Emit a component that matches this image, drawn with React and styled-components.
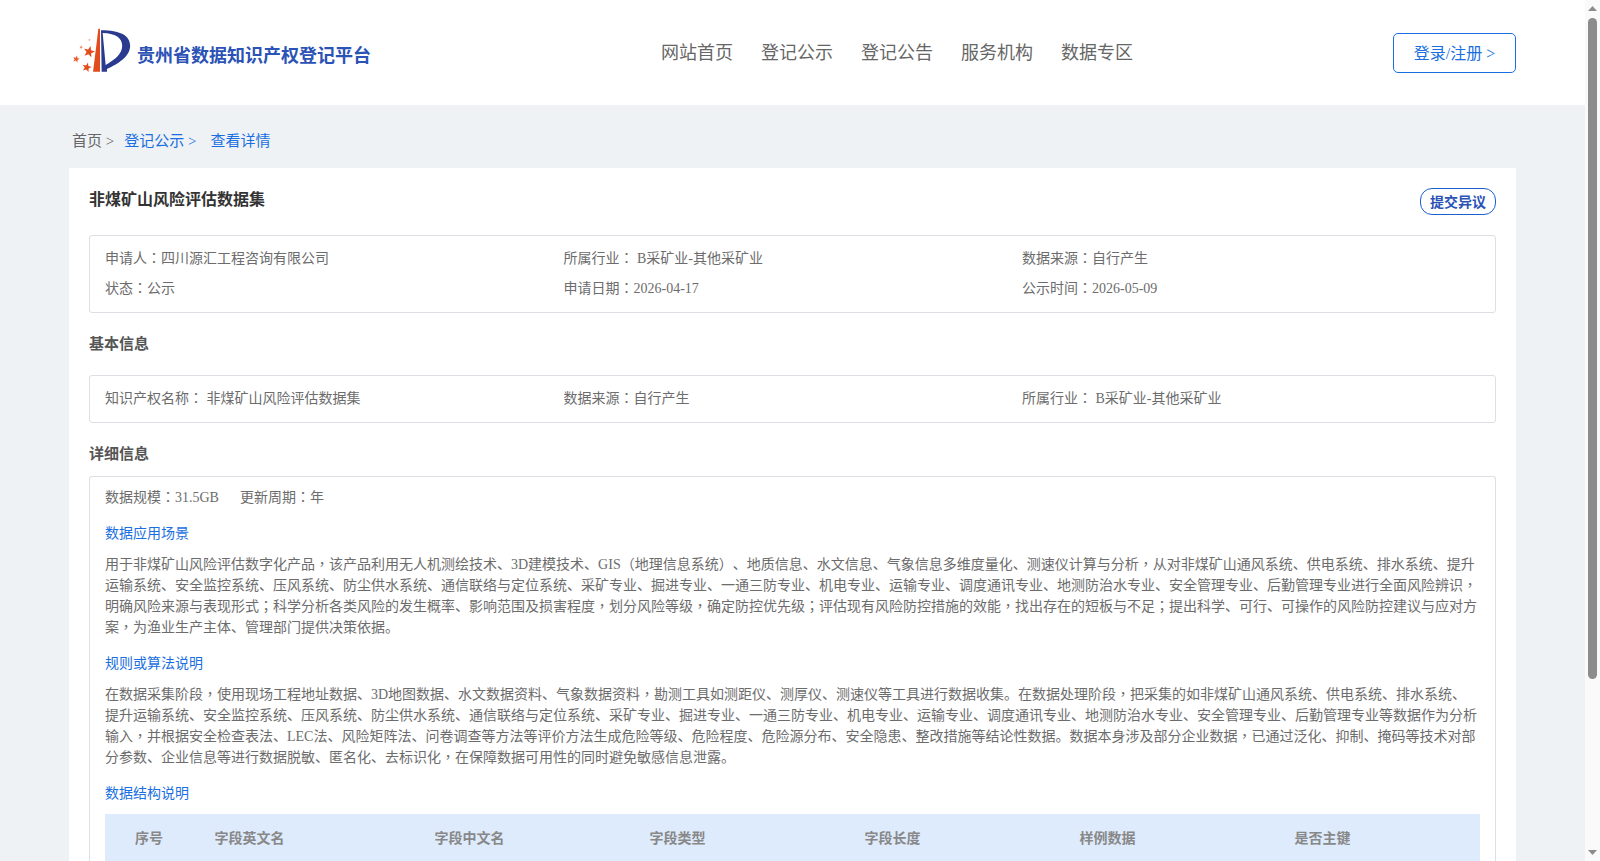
import React from "react";
import styled, { createGlobalStyle } from "styled-components";

const Global = createGlobalStyle`
  body {
    margin: 0;
    padding-right: 15px;
    background: #eff2f5;
    color: #6c6c6c;
    font-family: "Liberation Serif", "Noto Sans CJK SC", serif;
    font-size: 14px;
    text-spacing-trim: space-all;
    font-kerning: none;
  }
`;

const Header = styled.header`
  height: 105px;
  background: #fff;
  display: grid;
  grid-template-columns: 588px auto 1fr;
  align-items: center;
  padding: 0 69px 0 73px;
`;
const Brand = styled.div`
  display: flex;
  align-items: center;
  gap: 6px;
  color: #2b52b5;
  font-size: 18px;
  font-weight: bold;
  margin-top: 2px;
`;
const LogoMark = styled.svg`
  display: block;
  margin-bottom: 6px;
`;
const Nav = styled.nav`
  display: flex;
  gap: 28px;
  font-size: 18px;
  color: #666;
  margin-top: -3px;
`;
const Actions = styled.div`
  display: flex;
  justify-content: flex-end;
`;
const LoginButton = styled.button`
  width: 123px;
  height: 40px;
  background: #fff;
  border: 1px solid #1a6fe0;
  border-radius: 5px;
  color: #1a6fe0;
  font: 16px "Liberation Serif", "Noto Sans CJK SC", serif;
  padding: 0 0 2px;
`;
const Main = styled.main`
  width: 1447px;
  margin: 0 auto;
`;
const Crumbs = styled.div`
  height: 58px;
  padding: 5px 0 0 3px;
  display: flex;
  align-items: center;
  font-size: 15px;
  color: #666;
`;
const Crumb = styled.span`
  margin-right: ${(p) => p.$gap || 0}px;
  color: ${(p) => (p.$link ? "#1a6fe0" : "#666")};
`;
const Card = styled.section`
  background: #fff;
  padding: 20px 20px 40px;
  min-height: 842px;
  box-sizing: border-box;
`;
const TitleRow = styled.div`
  display: flex;
  justify-content: space-between;
  align-items: flex-start;
  height: 47px;
`;
const Title = styled.h1`
  margin: 0;
  font-size: 16px;
  font-weight: bold;
  color: #333;
  line-height: 24px;
`;
const ObjectButton = styled.button`
  width: 76px;
  height: 27px;
  background: #fff;
  border: 1px solid #1a5fd0;
  border-radius: 12px;
  color: #2b52b5;
  font: bold 14px "Liberation Serif", "Noto Sans CJK SC", serif;
  padding: 0 0 2px;
`;
const InfoBox = styled.div`
  border: 1px solid #dcdfe3;
  border-radius: 3px;
  padding: 8px 15px;
  display: grid;
  grid-template-columns: repeat(3, 458.5px);
  line-height: 30px;
`;
const SectionTitle = styled.h2`
  margin: 0;
  height: ${(p) => p.$height}px;
  padding-top: 20px;
  font-size: 15px;
  font-weight: bold;
  color: #555;
  line-height: 22px;
`;
const DetailBox = styled.div`
  border: 1px solid #dcdfe3;
  border-bottom: 0;
  border-radius: 3px 3px 0 0;
  padding: 10px 15px 0;
`;
const Stats = styled.div`
  display: flex;
  gap: 21px;
  line-height: 21px;
`;
const Sub = styled.h3`
  margin: 15.2px 0 9.8px;
  font-size: 14px;
  font-weight: normal;
  color: #1a6fe0;
  line-height: 21px;
`;
const Para = styled.p`
  margin: 0;
  line-height: 21px;
`;
const Punct = styled.span`
  font-family: "Noto Sans CJK TC", sans-serif;
  line-height: 0;
`;
const TableHead = styled.div`
  display: grid;
  grid-template-columns: 79.5px 220px repeat(4, 215px) 1fr;
  height: 50px;
  padding-bottom: 4px;
  box-sizing: border-box;
  align-items: center;
  background: #deebfd;
  color: #888;
  font-weight: bold;
  margin-top: 9px;
`;
const HeadCell = styled.div`
  padding-left: 30px;
`;
const ScrollBar = styled.aside`
  position: fixed;
  top: 0;
  right: 0;
  bottom: 0;
  width: 15px;
  background: #fafafa;
  display: flex;
  flex-direction: column;
  align-items: center;
`;
const ScrollArrow = styled.svg`
  display: block;
  margin: ${(p) => p.$margin};
`;
const ScrollThumb = styled.div`
  width: 9px;
  height: 661px;
  border-radius: 5px;
  background: #8c8c8c;
`;

const star = (cx, cy, r) => {
  const pts = [];
  for (let i = 0; i < 10; i++) {
    const rad = i % 2 ? r * 0.42 : r;
    const a = -Math.PI / 2 + (i * Math.PI) / 5 + 0.25;
    pts.push(`${(cx + rad * Math.cos(a)).toFixed(1)},${(cy + rad * Math.sin(a)).toFixed(1)}`);
  }
  return pts.join(" ");
};

const Logo = () => (
  <LogoMark width="58" height="45" viewBox="24 26 174 136">
    <path d="M100 28 L105 28 L105 158 L84 158 Z" fill="#e24c1c" />
    <path
      fillRule="evenodd"
      d="M108 33 C165 33 196 48 196 80 C196 112 160 135 126 150 L126 158 L110 158 Z M113 41 C155 42 172 58 172 80 C172 105 150 122 122 138 Z"
      fill="#2a3a8f"
    />
    <polygon points={star(72, 98, 18)} fill="#e24c1c" />
    <polygon points={star(65, 145, 15)} fill="#e24c1c" />
    <polygon points={star(33, 120, 11)} fill="#e9572a" />
    <polygon points={star(48, 84, 6)} fill="#ee8a60" />
    <polygon points={star(73, 62, 4)} fill="#f0a080" />
  </LogoMark>
);

const T = ({ children }) =>
  children.split(/([，：；])/).map((part, i) => (i % 2 ? <Punct key={i}>{part}</Punct> : part));

const para1 =
  "用于非煤矿山风险评估数字化产品，该产品利用无人机测绘技术、3D建模技术、GIS（地理信息系统）、地质信息、水文信息、气象信息多维度量化、测速仪计算与分析，从对非煤矿山通风系统、供电系统、排水系统、提升运输系统、安全监控系统、压风系统、防尘供水系统、通信联络与定位系统、采矿专业、掘进专业、一通三防专业、机电专业、运输专业、调度通讯专业、地测防治水专业、安全管理专业、后勤管理专业进行全面风险辨识，明确风险来源与表现形式；科学分析各类风险的发生概率、影响范围及损害程度，划分风险等级，确定防控优先级；评估现有风险防控措施的效能，找出存在的短板与不足；提出科学、可行、可操作的风险防控建议与应对方案，为渔业生产主体、管理部门提供决策依据。";
const para2 =
  "在数据采集阶段，使用现场工程地址数据、3D地图数据、水文数据资料、气象数据资料，勘测工具如测距仪、测厚仪、测速仪等工具进行数据收集。在数据处理阶段，把采集的如非煤矿山通风系统、供电系统、排水系统、提升运输系统、安全监控系统、压风系统、防尘供水系统、通信联络与定位系统、采矿专业、掘进专业、一通三防专业、机电专业、运输专业、调度通讯专业、地测防治水专业、安全管理专业、后勤管理专业等数据作为分析输入，并根据安全检查表法、LEC法、风险矩阵法、问卷调查等方法等评价方法生成危险等级、危险程度、危险源分布、安全隐患、整改措施等结论性数据。数据本身涉及部分企业数据，已通过泛化、抑制、掩码等技术对部分参数、企业信息等进行数据脱敏、匿名化、去标识化，在保障数据可用性的同时避免敏感信息泄露。";

const navItems = ["网站首页", "登记公示", "登记公告", "服务机构", "数据专区"];
const headCols = ["序号", "字段英文名", "字段中文名", "字段类型", "字段长度", "样例数据", "是否主键"];
const summary = [
  "申请人：四川源汇工程咨询有限公司",
  "所属行业： B采矿业-其他采矿业",
  "数据来源：自行产生",
  "状态：公示",
  "申请日期：2026-04-17",
  "公示时间：2026-05-09",
];
const basics = ["知识产权名称： 非煤矿山风险评估数据集", "数据来源：自行产生", "所属行业： B采矿业-其他采矿业"];

export default function App() {
  return (
    <>
      <Global />
      <Header>
        <Brand>
          <Logo />
          贵州省数据知识产权登记平台
        </Brand>
        <Nav>
          {navItems.map((n) => (
            <span key={n}>{n}</span>
          ))}
        </Nav>
        <Actions>
          <LoginButton>登录/注册 &gt;</LoginButton>
        </Actions>
      </Header>
      <Main>
        <Crumbs>
          <Crumb $gap={10}>首页 &gt;</Crumb>
          <Crumb $link $gap={14}>登记公示 &gt;</Crumb>
          <Crumb $link>查看详情</Crumb>
        </Crumbs>
        <Card>
          <TitleRow>
            <Title>非煤矿山风险评估数据集</Title>
            <ObjectButton>提交异议</ObjectButton>
          </TitleRow>
          <InfoBox>
            {summary.map((s) => (
              <span key={s}><T>{s}</T></span>
            ))}
          </InfoBox>
          <SectionTitle $height={42}>基本信息</SectionTitle>
          <InfoBox>
            {basics.map((s) => (
              <span key={s}><T>{s}</T></span>
            ))}
          </InfoBox>
          <SectionTitle $height={33}>详细信息</SectionTitle>
          <DetailBox>
            <Stats>
              <span><T>数据规模：31.5GB</T></span>
              <span><T>更新周期：年</T></span>
            </Stats>
            <Sub>数据应用场景</Sub>
            <Para><T>{para1}</T></Para>
            <Sub>规则或算法说明</Sub>
            <Para><T>{para2}</T></Para>
            <Sub>数据结构说明</Sub>
            <TableHead>
              {headCols.map((c) => (
                <HeadCell key={c}>{c}</HeadCell>
              ))}
            </TableHead>
          </DetailBox>
        </Card>
      </Main>
      <ScrollBar aria-hidden="true">
        <ScrollArrow $margin="6px 0 7px" width="9" height="5" viewBox="0 0 9 5">
          <path d="M4.5 0 L9 5 L0 5 Z" fill="#8c8c8c" />
        </ScrollArrow>
        <ScrollThumb />
        <ScrollArrow $margin="auto 0 6px" width="9" height="5" viewBox="0 0 9 5">
          <path d="M0 0 L9 0 L4.5 5 Z" fill="#8c8c8c" />
        </ScrollArrow>
      </ScrollBar>
    </>
  );
}
